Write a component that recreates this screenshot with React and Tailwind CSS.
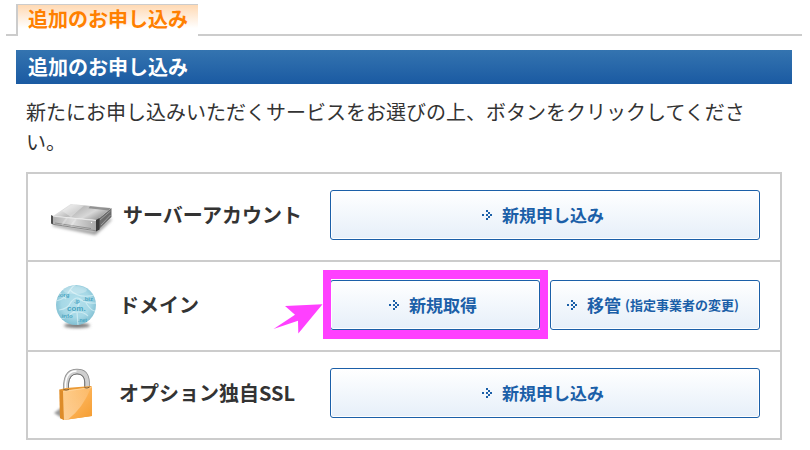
import React from "react";

function ServerIcon() {
  return (
    <svg viewBox="46 192 77 46" className="h-[46px] w-[77px] shrink-0" aria-hidden="true">
      <defs>
        <linearGradient id="srvTop" x1="0" y1="0" x2="1" y2="0.5">
          <stop offset="0" stopColor="#a2a2a2" />
          <stop offset="0.3" stopColor="#dedede" />
          <stop offset="0.5" stopColor="#bcbcbc" />
          <stop offset="0.75" stopColor="#d8d8d8" />
          <stop offset="1" stopColor="#9c9c9c" />
        </linearGradient>
        <linearGradient id="srvFront" x1="0" y1="0" x2="1" y2="0">
          <stop offset="0" stopColor="#b0b0b0" />
          <stop offset="0.45" stopColor="#dcdcdc" />
          <stop offset="1" stopColor="#a8a8a8" />
        </linearGradient>
        <filter id="srvBlur" x="-20%" y="-50%" width="140%" height="200%">
          <feGaussianBlur stdDeviation="1.4" />
        </filter>
      </defs>
      <path d="M53 225 L94 232 L111 219 L104 226 L95 234 Z" fill="#888" stroke="#999" strokeWidth="2" filter="url(#srvBlur)" />
      <path d="M53 216 L71 204 L111 208 L97 220 Z" fill="url(#srvTop)" />
      <path d="M62 211 L71 204 L84 205.5 L71 217 Z" fill="#f4f4f4" opacity="0.4" />
      <path d="M90 206.2 L110.500 208.3 L108.500 210.4 L88.500 208.2 Z" fill="#7d7d7d" opacity="0.75" />
      <path d="M97 220 L111.500 208 L111.500 217 L98 230 Z" fill="#6a6a6a" />
      <path d="M100 220 L110.500 211 M101 225 L110.500 215" stroke="#9c9c9c" strokeWidth="1" />
      <path d="M53 216 L97 220.500 L96 230.500 L53 224 Z" fill="url(#srvFront)" />
      <path d="M53 216.2 L97 220.7" stroke="#ededed" strokeWidth="0.8" />
      <path d="M55 223 L91 228.500" stroke="#7c7c7c" strokeWidth="0.7" />
      <path d="M53 224.3 L96 230.8" stroke="#777" strokeWidth="0.8" />
      <path d="M67 218 L62 225 M76 219 L71 226" stroke="#f3f3f3" strokeWidth="2" opacity="0.35" />
      <path d="M51 215 L53 216 L53 224.500 L51 223.500 Z" fill="#4d4d4d" />
      <path d="M96 220 L99.500 218 L99.500 229.500 L96 231.500 Z" fill="#3c3c3c" />
      <circle cx="91.500" cy="222.500" r="0.7" fill="#fff" />
    </svg>
  );
}

function GlobeIcon() {
  return (
    <svg viewBox="46 279 73 52" className="h-[52px] w-[73px] shrink-0" aria-hidden="true">
      <defs>
        <radialGradient id="globe" cx="0.5" cy="0.45" r="0.55">
          <stop offset="0" stopColor="#b4e0ec" />
          <stop offset="0.65" stopColor="#a6d8e6" />
          <stop offset="1" stopColor="#82c0d3" />
        </radialGradient>
        <clipPath id="globeClip">
          <circle cx="76" cy="305" r="20" />
        </clipPath>
        <filter id="globeBlur" x="-30%" y="-80%" width="160%" height="260%">
          <feGaussianBlur stdDeviation="1.5" />
        </filter>
      </defs>
      <ellipse cx="77" cy="325.500" rx="13" ry="2.500" fill="#777" filter="url(#globeBlur)" />
      <circle cx="76" cy="305" r="20" fill="url(#globe)" />
      <g clipPath="url(#globeClip)">
        <path
          d="M56 301 Q66 299 70 290 Q74 284 78 284 M70 290 Q80 300 98 294 M59 310 Q68 309 71 302 Q76 296 80 299 Q86 304 97 303 M80 299 Q79 309 72 313 Q66 319 60 318 M72 313 Q82 310 88 316 M86 303 Q92 312 96 311 M66 299 L58 291 M77 312 L78 325"
          fill="none"
          stroke="#e3f6fa"
          strokeWidth="1.2"
          opacity="0.6"
        />
        <g fill="#4aa5c2" fontFamily="Liberation Sans, Arial, sans-serif" fontWeight="700">
          <text x="58" y="297" fontSize="6">.org</text>
          <text x="74" y="303" fontSize="5">.jp</text>
          <text x="83" y="301" fontSize="6">.biz</text>
          <text x="67" y="311" fontSize="8">com.</text>
          <text x="60" y="318" fontSize="6">.info</text>
          <text x="78" y="322" fontSize="5">.net</text>
        </g>
        <ellipse cx="75" cy="290" rx="12" ry="4" fill="#fff" opacity="0.25" />
      </g>
    </svg>
  );
}

function LockIcon() {
  return (
    <svg viewBox="46 365 73 56" className="h-14 w-[73px] shrink-0" aria-hidden="true">
      <defs>
        <linearGradient id="lockBody" x1="0" y1="0" x2="1" y2="1">
          <stop offset="0" stopColor="#ffc87e" />
          <stop offset="0.5" stopColor="#fcb154" />
          <stop offset="1" stopColor="#f49c30" />
        </linearGradient>
        <linearGradient id="lockShine" x1="0" y1="0" x2="0" y2="1">
          <stop offset="0" stopColor="#fff" stopOpacity="0.1" />
          <stop offset="1" stopColor="#fff" stopOpacity="0.4" />
        </linearGradient>
        <filter id="lockBlur" x="-50%" y="-50%" width="200%" height="200%">
          <feGaussianBlur stdDeviation="1.2" />
        </filter>
      </defs>
      <path d="M54 413 L62 407 L62 418 Z" fill="#999" filter="url(#lockBlur)" />
      <path d="M66 390 V384 Q67 371.500 77 371.500 Q86.500 371.500 87 382 V388" fill="none" stroke="#8a8a8a" strokeWidth="5.600" />
      <path d="M66 390 V384 Q67 371.500 77 371.500 Q86.500 371.500 87 382 V388" fill="none" stroke="#cfcfcf" strokeWidth="4" />
      <path d="M65.500 389 V384 Q66.500 371 76.500 371" fill="none" stroke="#fff" strokeWidth="1.300" />
      <path d="M68.500 389 V384 Q69.500 374 77 374 Q84.500 374 84.800 382 V387" fill="none" stroke="#6a6a6a" strokeWidth="0.800" />
      <path d="M59.500 389.500 L66 388 L91.500 386 L92 416 L64 420 L60 418 Z" fill="#eb9a35" />
      <path d="M59.500 389.500 L63 391 L64 420 L60 418 Z" fill="#dd8c2a" />
      <path d="M63 391 L92 387 L92 416 L64 420 Z" fill="url(#lockBody)" />
      <path d="M63 391 L91 387.500 Q83 408 68 419.500 L64 420 Z" fill="url(#lockShine)" />
      <path d="M63.500 391.300 L91.500 387.500" stroke="#ffd9a3" strokeWidth="0.800" />
      <path d="M63.500 389.500 Q66 390.700 69 389.500 M84.500 387.700 Q87 388.700 89.500 387.200" fill="none" stroke="#7a5a35" strokeWidth="1" />
    </svg>
  );
}

function DotArrow() {
  return (
    <svg viewBox="0 0 10 10" className="h-2.5 w-2.5 shrink-0" shapeRendering="crispEdges" aria-hidden="true">
      <path
        fill="#1b5fa8"
        d="M4 0h2v2h-2z M6 2h2v2h-2z M0 4h2v2h-2z M4 4h2v2h-2z M8 4h2v2h-2z M6 6h2v2h-2z M4 8h2v2h-2z"
      />
    </svg>
  );
}

function ActionButton({ children, note }) {
  return (
    <button
      type="button"
      className="flex h-[50px] w-full items-center justify-center gap-2.5 rounded-[3px] border border-[#1b5fa8] bg-linear-to-b from-white to-[#e6eff9] pr-1 text-[17px] leading-6 font-bold whitespace-nowrap text-[#1b5fa8] inset-ring inset-ring-white"
    >
      <DotArrow />
      <span className="flex items-center gap-1">
        {children}
        {note && <span className="text-[13px]">{note}</span>}
      </span>
    </button>
  );
}

function Highlight() {
  return (
    <>
      <div className="pointer-events-none absolute -top-2.5 -right-2 -bottom-[9px] -left-[7px] border-x-8 border-y-9 border-[#ff40ff]" />
      <svg
        viewBox="272 302 52 34"
        className="pointer-events-none absolute top-[22px] -left-[58px] h-[34px] w-[52px]"
        aria-hidden="true"
      >
        <path d="M273.500 329 L295 314.700 L285 306 L322.500 304.300 L298.300 333.500 L298 320.700 Z" fill="#ff40ff" />
      </svg>
    </>
  );
}

function ServiceRow({ icon, name, children }) {
  return (
    <li className="flex items-center border-b-2 border-[#cccccc] pt-4 pr-5 pb-5 pl-[18px] even:pt-[18px] last:border-b-0">
      <div className="flex h-[50px] w-[284px] shrink-0 items-center">
        {icon}
        <h3 className="text-[20px] leading-7 font-bold whitespace-nowrap text-[#333333]">{name}</h3>
      </div>
      <div className="flex min-w-0 flex-1 gap-2.5">{children}</div>
    </li>
  );
}

export default function App() {
  return (
    <div className="bg-white pt-1 pr-2 pb-2.5 pl-1.5 font-['Noto_Sans_CJK_JP','Noto_Sans',sans-serif] text-[#333333]">
      <nav className="flex items-stretch">
        <div className="w-2.5 border-b-2 border-[#cccccc]" />
        <a
          href="#order"
          className="h-8 border-t border-l-2 border-[#cccccc] bg-linear-to-b from-[#ffd9b3] to-white to-75% px-2.5 text-[20px] leading-7 font-bold text-[#ff8000]"
        >
          追加のお申し込み
        </a>
        <div className="flex-1 border-b-2 border-[#cccccc]" />
      </nav>

      <main id="order" className="mt-3.5 mr-2.5 ml-2.5">
        <h2 className="bg-linear-to-b from-[#3474b0] to-[#1a5aa2] px-3 text-[20px] leading-[34px] font-bold text-white">
          追加のお申し込み
        </h2>
        <div className="mr-2.5 ml-2.5">
          <p className="mt-[13px] text-[20px] leading-[30px]">
            新たにお申し込みいただくサービスをお選びの上、ボタンをクリックしてください。
          </p>
          <ul className="mt-[15px] border-2 border-[#cccccc]">
            <ServiceRow icon={<ServerIcon />} name="サーバーアカウント">
              <ActionButton>新規申し込み</ActionButton>
            </ServiceRow>
            <ServiceRow icon={<GlobeIcon />} name="ドメイン">
              <div className="relative min-w-0 flex-1">
                <ActionButton>新規取得</ActionButton>
                <Highlight />
              </div>
              <div className="min-w-0 flex-1">
                <ActionButton note="(指定事業者の変更)">移管</ActionButton>
              </div>
            </ServiceRow>
            <ServiceRow icon={<LockIcon />} name="オプション独自SSL">
              <ActionButton>新規申し込み</ActionButton>
            </ServiceRow>
          </ul>
        </div>
      </main>
    </div>
  );
}
